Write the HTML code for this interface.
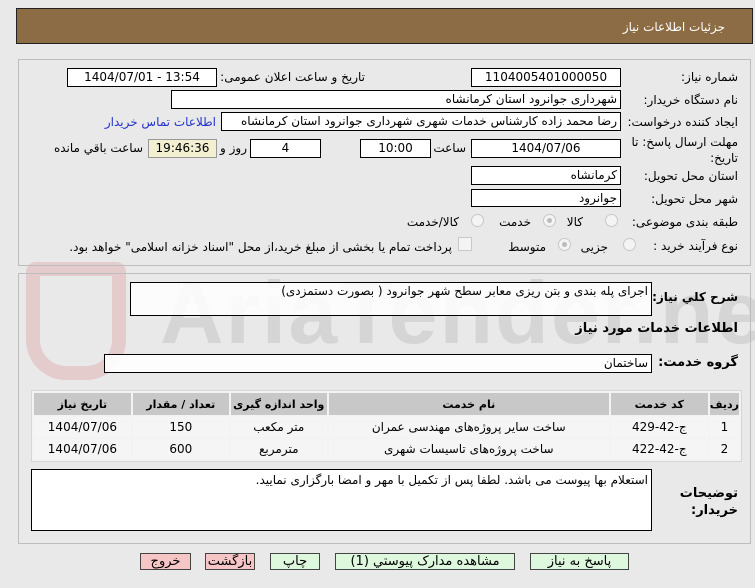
<!DOCTYPE html>
<html><head><meta charset="utf-8"><style>
body{margin:0;width:755px;height:588px;background:#e9e9e9;font-family:"DejaVu Sans","Liberation Sans",sans-serif;font-size:12px;color:#000;position:relative;overflow:hidden}
.a{position:absolute;white-space:nowrap}
.box{position:absolute;background:#fff;border:1px solid #000;box-sizing:border-box;direction:rtl;padding:0 3px;line-height:16px;font-size:12px;overflow:hidden;white-space:nowrap}
.c{text-align:center}
.lbl{position:absolute;direction:rtl;text-align:right;white-space:nowrap}
.panel{position:absolute;border:1px solid #bdbdbd;box-sizing:border-box}
.rad{position:absolute;width:11px;height:11px;border:1px solid #c8c8c8;border-radius:50%;background:#f4f4f4}
.rad.on::after{content:"";position:absolute;left:3px;top:3px;width:5px;height:5px;border-radius:50%;background:#bbb}
table{position:absolute;border-collapse:separate;border-spacing:2px;background:#f3f3f3;border:1px solid #d6d6d6}
td{text-align:center;height:20px;font-size:12px;background:#f5f5f5;padding:0}
th{background:#c8c8c8;height:22px;font-size:11px;white-space:nowrap;padding:0}
.btn{position:absolute;top:553px;height:17px;border:1px solid #444;box-sizing:border-box;text-align:center;line-height:15px;font-size:13px;direction:rtl}
</style></head><body>
<div class="a" style="left:16px;top:8px;width:737px;height:36px;background:#8c6c44;border:1px solid #222;box-sizing:border-box"></div>
<div class="lbl" style="right:30px;top:20px;color:#fff;font-size:12px">جزئیات اطلاعات نیاز</div>

<div class="a" style="left:160px;top:262px;font-size:88px;font-weight:bold;color:rgba(160,160,160,.28);letter-spacing:2px;font-family:'Liberation Sans',sans-serif">AriaTender.net</div>
<div class="a" style="left:26px;top:262px;width:72px;height:90px;border:14px solid rgba(220,120,120,.25);border-radius:10px 10px 40px 40px"></div>

<div class="panel" style="left:18px;top:59px;width:733px;height:207px"></div>
<div class="lbl" style="right:17px;top:70px">شماره نیاز:</div>
<div class="box c" style="left:471px;top:68px;width:150px;height:19px;direction:ltr">1104005401000050</div>
<div class="lbl" style="right:390px;top:70px">تاریخ و ساعت اعلان عمومی:</div>
<div class="box c" style="left:67px;top:68px;width:150px;height:19px;direction:ltr">1404/07/01 - 13:54</div>

<div class="lbl" style="right:17px;top:93px">نام دستگاه خریدار:</div>
<div class="box" style="left:171px;top:90px;width:450px;height:19px">شهرداری جوانرود استان کرمانشاه</div>

<div class="lbl" style="right:17px;top:115px">ایجاد کننده درخواست:</div>
<div class="box" style="left:221px;top:112px;width:400px;height:19px">رضا محمد زاده کارشناس خدمات شهری شهرداری جوانرود استان کرمانشاه</div>
<div class="lbl" style="right:539px;top:115px;color:#2233cc">اطلاعات تماس خریدار</div>

<div class="lbl" style="right:17px;top:134px;line-height:16px;text-align:right">مهلت ارسال پاسخ: تا<br>تاریخ:</div>
<div class="box c" style="left:471px;top:139px;width:150px;height:19px;direction:ltr">1404/07/06</div>
<div class="lbl" style="right:289px;top:141px">ساعت</div>
<div class="box c" style="left:360px;top:139px;width:71px;height:19px">10:00</div>
<div class="box c" style="left:250px;top:139px;width:71px;height:19px">4</div>
<div class="lbl" style="right:508px;top:141px">روز و</div>
<div class="box c" style="left:148px;top:139px;width:69px;height:19px;background:#f3f0d2;border-color:#999">19:46:36</div>
<div class="lbl" style="right:612px;top:141px">ساعت باقي مانده</div>

<div class="lbl" style="right:17px;top:169px">استان محل تحویل:</div>
<div class="box" style="left:471px;top:166px;width:150px;height:19px">کرمانشاه</div>
<div class="lbl" style="right:17px;top:192px">شهر محل تحویل:</div>
<div class="box" style="left:471px;top:189px;width:150px;height:18px">جوانرود</div>

<div class="lbl" style="right:17px;top:215px">طبقه بندی موضوعی:</div>
<div class="rad" style="left:605px;top:214px"></div><div class="lbl" style="right:172px;top:215px">کالا</div>
<div class="rad on" style="left:543px;top:214px"></div><div class="lbl" style="right:224px;top:215px">خدمت</div>
<div class="rad" style="left:471px;top:214px"></div><div class="lbl" style="right:296px;top:215px">کالا/خدمت</div>

<div class="lbl" style="right:17px;top:239px">نوع فرآیند خرید :</div>
<div class="rad" style="left:623px;top:238px"></div><div class="lbl" style="right:147px;top:240px">جزیی</div>
<div class="rad on" style="left:558px;top:238px"></div><div class="lbl" style="right:209px;top:240px">متوسط</div>
<div class="a" style="left:458px;top:237px;width:12px;height:12px;border:1px solid #c8c8c8;background:#f4f4f4"></div>
<div class="lbl" style="right:303px;top:240px">پرداخت تمام یا بخشی از مبلغ خرید،از محل "اسناد خزانه اسلامی" خواهد بود.</div>

<div class="panel" style="left:18px;top:273px;width:733px;height:271px"></div>
<div class="lbl" style="right:17px;top:290px;font-weight:bold;font-size:12px">شرح کلي نیاز:</div>
<div class="box" style="left:130px;top:282px;width:522px;height:34px;background:rgba(255,255,255,.85)">اجرای پله بندی و بتن ریزی معابر سطح شهر جوانرود ( بصورت دستمزدی)</div>
<div class="lbl" style="right:17px;top:321px;font-weight:bold;font-size:13px">اطلاعات خدمات مورد نیاز</div>
<div class="lbl" style="right:17px;top:355px;font-weight:bold;font-size:13px">گروه خدمت:</div>
<div class="box" style="left:104px;top:354px;width:548px;height:19px;background:rgba(255,255,255,.9)">ساختمان</div>

<table style="left:31px;top:390px;width:711px;direction:rtl">
<tr><th style="width:29px">ردیف</th><th style="width:97px">کد خدمت</th><th style="width:280px">نام خدمت</th><th style="width:96px">واحد اندازه گیری</th><th style="width:96px">تعداد / مقدار</th><th>تاریخ نیاز</th></tr>
<tr><td>1</td><td>ج-42-429</td><td>ساخت سایر پروژه‌های مهندسی عمران</td><td>متر مکعب</td><td>150</td><td>1404/07/06</td></tr>
<tr><td>2</td><td>ج-42-422</td><td>ساخت پروژه‌های تاسیسات شهری</td><td>مترمربع</td><td>600</td><td>1404/07/06</td></tr>
</table>

<div class="box" style="left:31px;top:469px;width:621px;height:62px;padding-top:2px;line-height:16px">استعلام بها پیوست می باشد. لطفا پس از تکمیل با مهر و امضا بارگزاری نمایید.</div>
<div class="lbl" style="right:17px;top:485px;font-weight:bold;font-size:13px;line-height:17px">توضیحات<br>خریدار:</div>

<div class="btn" style="left:140px;width:51px;background:#f6c6c6">خروج</div>
<div class="btn" style="left:205px;width:50px;background:#f6c6c6">بازگشت</div>
<div class="btn" style="left:270px;width:50px;background:#ddf8dd">چاپ</div>
<div class="btn" style="left:335px;width:180px;background:#ddf8dd">مشاهده مدارک پیوستي (1)</div>
<div class="btn" style="left:530px;width:99px;background:#ddf8dd">پاسخ به نیاز</div>
</body></html>
